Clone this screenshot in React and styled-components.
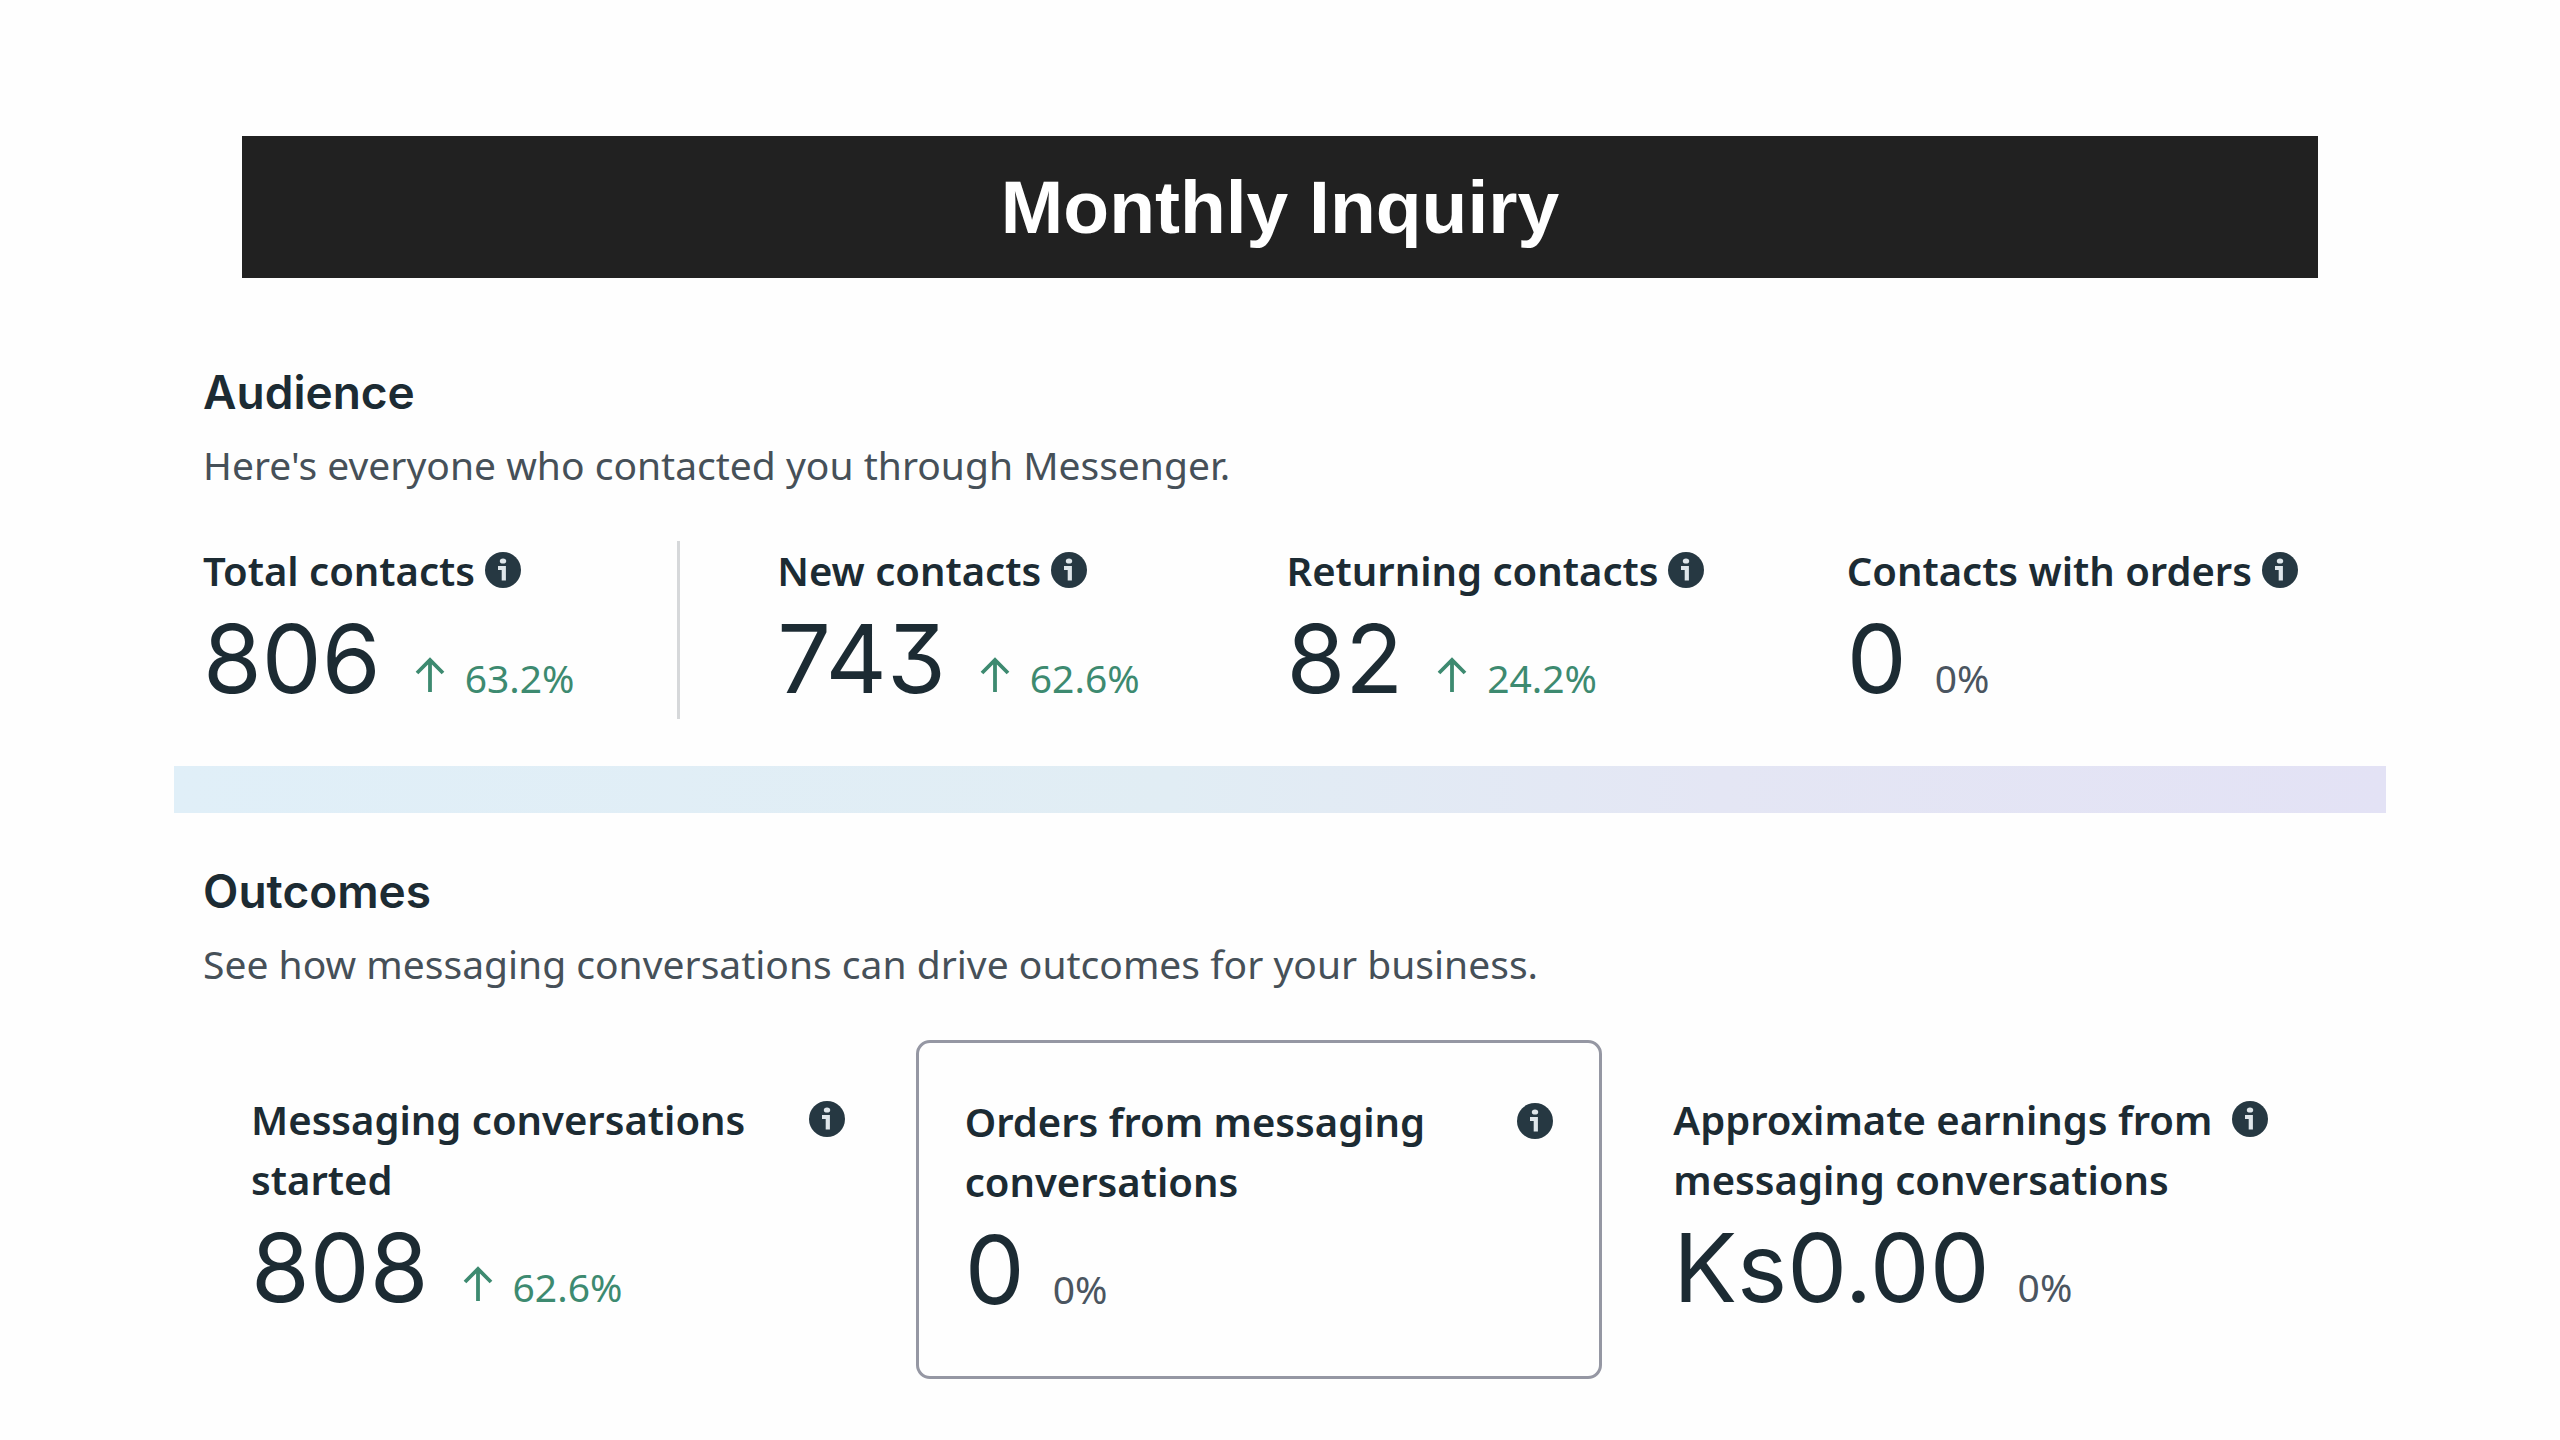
import React from 'react'
import styled, { createGlobalStyle } from 'styled-components'


const audience = [
  { label: 'Total contacts', value: '806', change: '63.2%', up: true, divided: true },
  { label: 'New contacts', value: '743', change: '62.6%', up: true },
  { label: 'Returning contacts', value: '82', change: '24.2%', up: true },
  { label: 'Contacts with orders', value: '0', change: '0%' },
]

const outcomes = [
  { label: 'Messaging conversations started', value: '808', change: '62.6%', up: true },
  { label: 'Orders from messaging conversations', value: '0', change: '0%', selected: true },
  { label: 'Approximate earnings from messaging conversations', value: 'Ks0.00', change: '0%' },
]

//Icons
const InfoIcon = () => (
  <InfoSvg viewBox="0 0 36 36" aria-hidden="true">
    <circle cx="18" cy="18" r="18" fill="#263842" />
    <ellipse cx="18" cy="9" rx="3.2" ry="2.6" fill="#dfe6ea" />
    <path d="M13 16H18.8V28.5" fill="none" stroke="#dfe6ea" strokeWidth="4.2" />
  </InfoSvg>
)

const UpArrow = () => (
  <ArrowSvg viewBox="0 0 30 36" aria-hidden="true">
    <path d="M15 35V3M2 16L15 3L28 16" fill="none" stroke="currentColor" strokeWidth="3.8" />
  </ArrowSvg>
)

//One figure with its label and its change
function Metric({ label, value, change, up, spread }) {
  return (
    <>
      <Label $spread={spread}>
        <span>{label}</span>
        <InfoIcon />
      </Label>
      <Figures>
        <Value>{value}</Value>
        <Change $up={up}>
          {up && <UpArrow />}
          <span>{change}</span>
        </Change>
      </Figures>
    </>
  )
}

function App() {
  return (
    <Page>
      <GlobalStyle />
      <Banner>Monthly Inquiry</Banner>

      <Report>
        <Section>
          <Heading>Audience</Heading>
          <Description>Here's everyone who contacted you through Messenger.</Description>
          <ContactGrid>
            {audience.map(item => (
              <Contact key={item.label} $divided={item.divided}>
                <Metric {...item} />
              </Contact>
            ))}
          </ContactGrid>
        </Section>

        <Band />

        <Section>
          <Heading>Outcomes</Heading>
          <Description>See how messaging conversations can drive outcomes for your business.</Description>
          <OutcomeGrid>
            {outcomes.map(item => (
              <Outcome key={item.label} $selected={item.selected}>
                <Metric {...item} spread />
              </Outcome>
            ))}
          </OutcomeGrid>
        </Section>
      </Report>
    </Page>
  )
}

export default App

//Styled Components
const GlobalStyle = createGlobalStyle`
  * {
    box-sizing: border-box;
  }

  body {
    margin: 0;
    background: #fefefe;
    color: #1c2b33;
    font-family: "Noto Sans", "Open Sans", sans-serif;
  }
`

const Page = styled.main`
  padding-top: 136px;
`

const Banner = styled.h1`
  margin: 0 auto 36px;
  width: 81.1%;
  background: #212121;
  color: #ffffff;
  font: bold 75px/142px "Liberation Sans", Arial, sans-serif;
  text-align: center;
`

const Report = styled.div`
  margin: 0 auto;
  width: 86.4%;
`

const Section = styled.section`
  padding: 48px 0 47px 29px;
`

const Heading = styled.h2`
  margin: 0 0 13px;
  font: 600 46px/60px Inter, sans-serif;
`

const Description = styled.p`
  margin: 0 0 46px;
  color: #465058;
  font-size: 39px;
  line-height: 60px;
`

const ContactGrid = styled.div`
  display: grid;
  grid-template-columns: 574fr 509fr 560fr 539fr;
`

const Contact = styled.div`
  ${({ $divided }) => $divided && `
    margin-right: 97px;
    border-right: 3px solid #d6d8da;
  `}
`

const Band = styled.div`
  height: 47px;
  background: linear-gradient(90deg, #e0eff8, #e1edf4 45%, #e4e6f4 70%, #e3e2f5);
`

const OutcomeGrid = styled.div`
  display: grid;
  grid-template-columns: 689fr 686fr 690fr;
  gap: 23px;
  padding-right: 70px;
`

const Outcome = styled.div`
  padding: 50px 48px 46px;
  ${({ $selected }) => $selected && `
    padding: 49px 46px 46px;
    border: 3px solid #9597a3;
    border-radius: 14px;
  `}
`

const Label = styled.div`
  display: flex;
  align-items: flex-start;
  justify-content: ${({ $spread }) => ($spread ? 'space-between' : 'flex-start')};
  gap: 10px;
  font-size: 40px;
  font-weight: 600;
  line-height: 60px;
`

const Figures = styled.div`
  display: flex;
  align-items: baseline;
  gap: 28px;
  padding-bottom: 2px;
`

const Value = styled.strong`
  font: 400 95px/116px Inter, sans-serif;
  font-feature-settings: "cv09";
`

const Change = styled.span`
  display: flex;
  align-items: baseline;
  gap: 20px;
  color: ${({ $up }) => ($up ? '#3d8a70' : '#4b5560')};
  font-size: 39px;
`

const InfoSvg = styled.svg`
  flex: none;
  margin-top: 11px;
  width: 36px;
  height: 36px;
`

const ArrowSvg = styled.svg`
  margin-left: 6px;
  width: 30px;
  height: 36px;
`
